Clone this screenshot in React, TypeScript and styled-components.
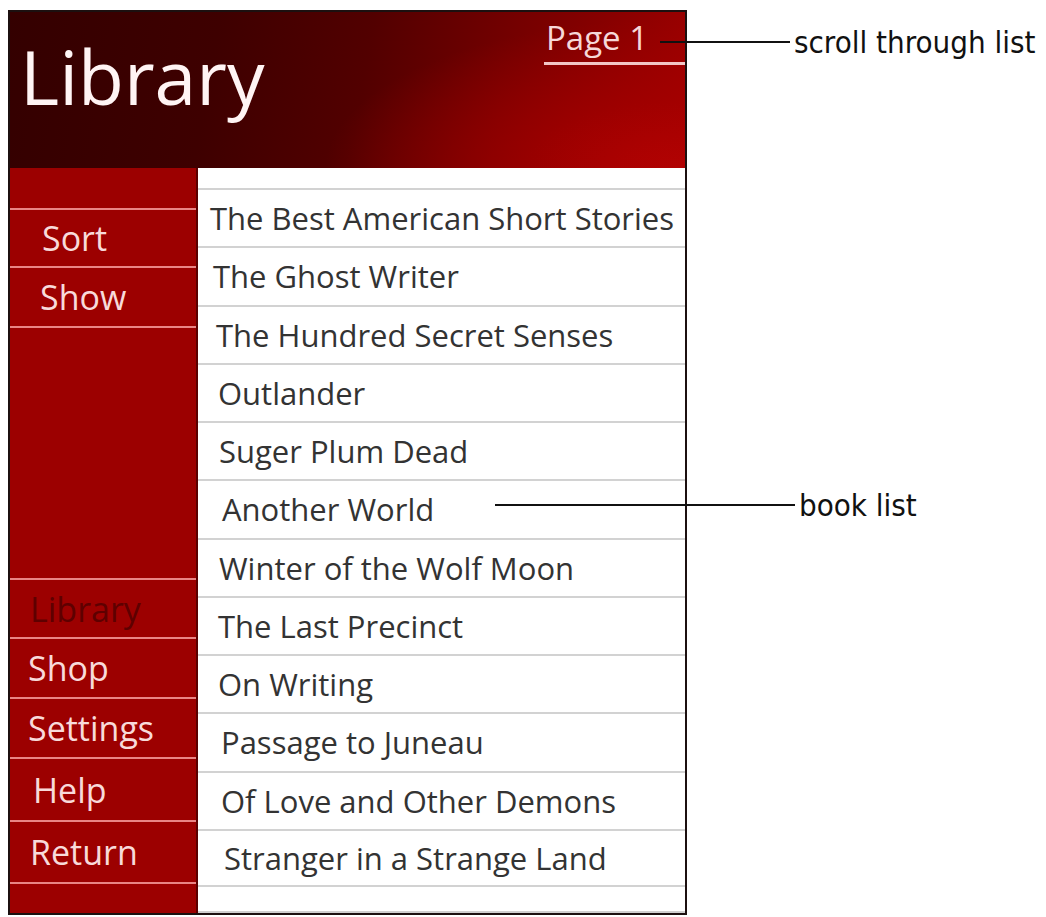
import React from "react";
import styled, { createGlobalStyle } from "styled-components";

const Global = createGlobalStyle`
  html, body { margin: 0; padding: 0; background: #ffffff; }
  body { width: 1046px; height: 917px; overflow: hidden; }
`;

const Page = styled.div`
  position: relative;
  width: 1046px;
  height: 917px;
  padding: 10px 0 0 8px;
  box-sizing: border-box;
`;

const Device = styled.div`
  display: flex;
  flex-direction: column;
  width: 679px;
  height: 905px;
  border: 2px solid #1c1010;
  box-sizing: border-box;
  background: #9c0000;
`;

const Header = styled.header`
  position: relative;
  height: 156px;
  flex: none;
  background:
    radial-gradient(ellipse 360px 150px at 100% 100%, #b20202 0%, rgba(168,0,0,0.6) 45%, rgba(120,0,0,0) 100%),
    linear-gradient(100deg, #340000 0%, #3e0000 30%, #520000 52%, #740000 72%, #9e0000 100%);
  display: flex;
  align-items: flex-start;
  justify-content: space-between;
`;

const Title = styled.h1`
  margin: 13px 0 0 10px;
  font-family: "Open Sans", "Noto Sans", sans-serif;
  font-weight: 400;
  font-size: 75px;
  line-height: 102px;
  color: #fff4f4;
`;

const PageLink = styled.div`
  margin: 6px 0 0 0;
  width: 141px;
  padding: 0 0 4px 2px;
  border-bottom: 3px solid #f2c6c6;
  font-family: "Open Sans", "Noto Sans", sans-serif;
  font-size: 33px;
  line-height: 40px;
  color: #f6d8d8;
  box-sizing: border-box;
  white-space: nowrap;
`;

const Body = styled.div`
  flex: 1;
  display: flex;
  min-height: 0;
`;

const Sidebar = styled.nav`
  width: 188px;
  flex: none;
  background: #9c0000;
  display: flex;
  flex-direction: column;
  justify-content: space-between;
  padding: 40px 0 29px;
  box-sizing: border-box;
  border-right: 2px solid #5a0000;
`;

const NavGroup = styled.div`
  display: flex;
  flex-direction: column;
  border-bottom: 2px solid #e98585;
`;

const NavItem = styled.div<{ $indent: number; $h: number; $muted?: boolean }>`
  height: ${(p) => p.$h}px;
  border-top: 2px solid #e98585;
  display: flex;
  align-items: center;
  padding-left: ${(p) => p.$indent}px;
  font-family: "Open Sans", "Noto Sans", sans-serif;
  font-size: 34px;
  color: ${(p) => (p.$muted ? "#5e0000" : "#f8dada")};
  box-sizing: border-box;
  white-space: nowrap;
`;

const List = styled.ul`
  flex: 1;
  margin: 0;
  padding: 20px 0 24px;
  list-style: none;
  background: #ffffff;
  display: flex;
  flex-direction: column;
  border-bottom: 2px solid #cfcfcf;
`;

const Row = styled.li<{ $indent: number }>`
  height: 58.25px;
  border-top: 2px solid #d2d2d2;
  display: flex;
  align-items: center;
  padding-left: ${(p) => p.$indent}px;
  font-family: "Open Sans", "Noto Sans", sans-serif;
  font-size: 31px;
  color: #333333;
  box-sizing: border-box;
  white-space: nowrap;
  &:last-child { border-bottom: 2px solid #d2d2d2; }
`;

const Callout = styled.div<{ $top: number; $left: number }>`
  position: absolute;
  top: ${(p) => p.$top}px;
  left: ${(p) => p.$left}px;
  display: flex;
  align-items: center;
`;

const Leader = styled.div<{ $width: number }>`
  width: ${(p) => p.$width}px;
  height: 2px;
  background: #111;
`;

const CalloutText = styled.span`
  margin-left: 4px;
  font-family: "Liberation Sans Narrow", "DejaVu Sans Condensed", "Roboto", sans-serif;
  font-size: 31px;
  color: #111;
  white-space: nowrap;
`;

const books: [string, number][] = [
  ["The Best American Short Stories", 12],
  ["The Ghost Writer", 15],
  ["The Hundred Secret Senses", 18],
  ["Outlander", 20],
  ["Suger Plum Dead", 21],
  ["Another World", 24],
  ["Winter of the Wolf Moon", 21],
  ["The Last Precinct", 20],
  ["On Writing", 20],
  ["Passage to Juneau", 23],
  ["Of Love and Other Demons", 23],
  ["Stranger in a Strange Land", 26],
];

export default function App() {
  return (
    <>
      <Global />
      <Page>
        <Device>
          <Header>
            <Title>Library</Title>
            <PageLink>Page 1</PageLink>
          </Header>
          <Body>
            <Sidebar>
              <NavGroup>
                <NavItem $indent={32} $h={58}>Sort</NavItem>
                <NavItem $indent={30} $h={60}>Show</NavItem>
              </NavGroup>
              <NavGroup>
                <NavItem $indent={20} $h={59} $muted>Library</NavItem>
                <NavItem $indent={18} $h={60}>Shop</NavItem>
                <NavItem $indent={18} $h={60}>Settings</NavItem>
                <NavItem $indent={23} $h={63}>Help</NavItem>
                <NavItem $indent={20} $h={62}>Return</NavItem>
              </NavGroup>
            </Sidebar>
            <List>
              {books.map(([t, i]) => (
                <Row key={t} $indent={i}>{t}</Row>
              ))}
            </List>
          </Body>
        </Device>
        <Callout $top={24} $left={660}>
          <Leader $width={130} />
          <CalloutText>scroll through list</CalloutText>
        </Callout>
        <Callout $top={487} $left={495}>
          <Leader $width={300} />
          <CalloutText>book list</CalloutText>
        </Callout>
      </Page>
    </>
  );
}
